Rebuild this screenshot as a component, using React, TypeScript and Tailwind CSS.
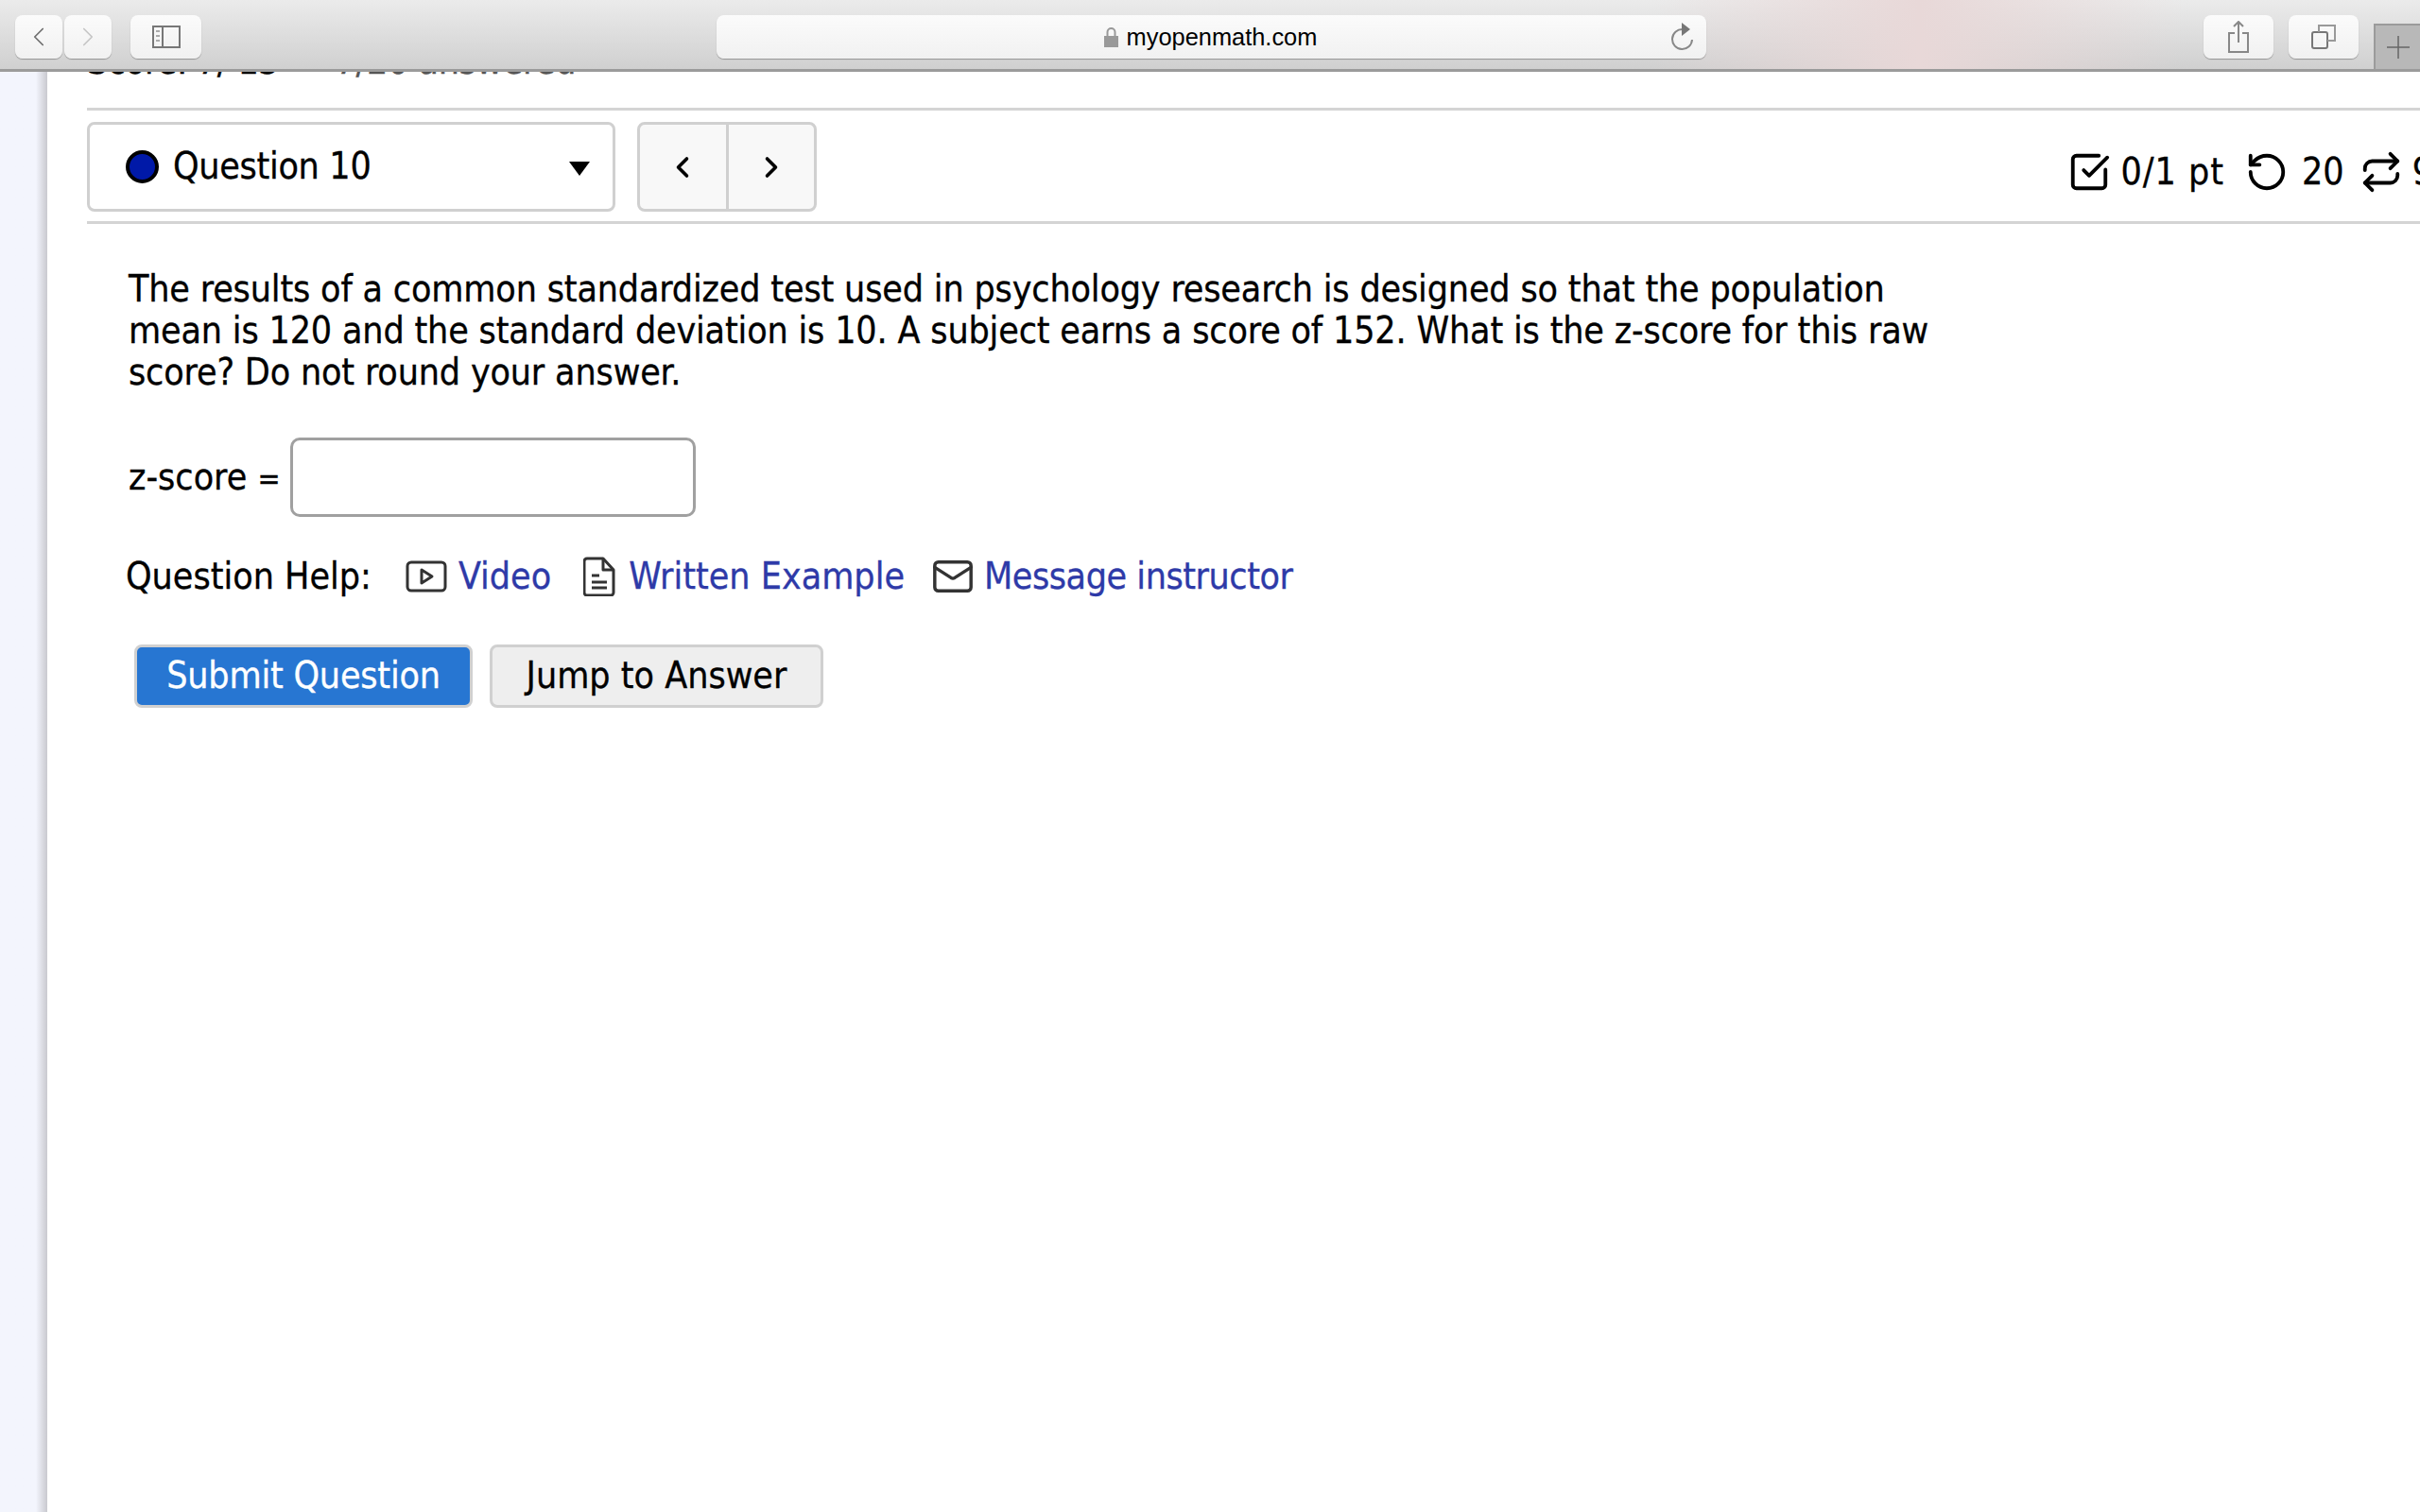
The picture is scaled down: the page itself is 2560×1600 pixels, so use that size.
import { ChevronLeft, ChevronRight, Mail, Repeat, RotateCcw, SquareCheckBig } from 'lucide-react';

const bodyFont = "font-['DejaVu_Sans',sans-serif] [font-stretch:condensed] [-webkit-text-stroke:0.3px_currentColor]";

function ToolbarButton({ className, children }: { className: string; children: React.ReactNode }) {
  return (
    <div className={`h-[46px] flex items-center justify-center rounded-[8px] bg-gradient-to-b from-[#fbfbfb] to-[#f1f1f1] shadow-[0_1px_1px_rgba(0,0,0,0.3)] ${className}`}>
      {children}
    </div>
  );
}

export default function App() {
  return (
    <div className="w-[2560px] h-[1600px] overflow-hidden bg-white flex flex-col">
      {/* browser toolbar */}
      <div className="relative h-[76px] shrink-0 bg-gradient-to-b from-[#ebebeb] to-[#d0d0d0] border-b-[3px] border-[#9b9b9b] flex items-start pt-[16px] pl-[16px] z-10">
        <div className="absolute top-0 right-[250px] w-[560px] h-full bg-gradient-to-r from-transparent via-[#e8d8d8] to-transparent" />
        <div className="relative flex gap-[2px]">
          <ToolbarButton className="w-[50px]">
            <ChevronLeft size={34} strokeWidth={1.2} className="text-[#6e6e6e]" />
          </ToolbarButton>
          <ToolbarButton className="w-[50px]">
            <ChevronRight size={34} strokeWidth={1.2} className="text-[#c6c6c6]" />
          </ToolbarButton>
        </div>
        <ToolbarButton className="relative ml-[20px] w-[75px]">
          <svg width="30" height="24" viewBox="0 0 30 24" fill="none">
            <rect x="1" y="1" width="28" height="22" stroke="#777" strokeWidth="2" />
            <path d="M11 1v22" stroke="#777" strokeWidth="2" />
            <path d="M4 6h4M4 11h4M4 16h4" stroke="#aaa" strokeWidth="2" />
          </svg>
        </ToolbarButton>
        <ToolbarButton className="relative ml-[545px] w-[1047px]">
          <div className="flex items-center gap-[9px] font-['Liberation_Sans',sans-serif] text-[25.4px] text-black -ml-[2px]">
            <svg width="15" height="22" viewBox="0 0 15 22">
              <path d="M3.500 10V6a4 4 0 0 1 8 0v4" fill="none" stroke="#999" strokeWidth="2" />
              <rect x="0" y="10" width="15" height="12" fill="#999" />
            </svg>
            myopenmath.com
          </div>
          <svg className="absolute right-[12px] top-[8px]" width="26" height="30" viewBox="0 0 26 30" fill="none">
            <path d="M13 7a10.500 10.500 0 1 0 10 11" stroke="#888" strokeWidth="2" />
            <path d="M12 0l9 7-9 7z" fill="#777" />
          </svg>
        </ToolbarButton>
        <ToolbarButton className="relative ml-[526px] w-[74px]">
          <svg width="24" height="34" viewBox="0 0 24 34" fill="none">
            <path d="M12 1v22M7 6l5-5 5 5" stroke="#888" strokeWidth="2" />
            <path d="M8 13H2v20h20V13h-6" stroke="#888" strokeWidth="2" />
          </svg>
        </ToolbarButton>
        <ToolbarButton className="relative ml-[16px] w-[74px]">
          <svg width="26" height="26" viewBox="0 0 26 26" fill="none">
            <rect x="1" y="8" width="16" height="17" rx="2" stroke="#777" strokeWidth="2" />
            <path d="M8 8V1h17v16h-8" stroke="#999" strokeWidth="2" />
          </svg>
        </ToolbarButton>
        <div className="relative ml-[16px] mt-[9px] flex-1 h-[48px] bg-[#b8b8b8] border-l-2 border-t-2 border-[#9b9b9b] flex items-center pl-[12px]">
          <svg width="24" height="24" viewBox="0 0 24 24" fill="none">
            <path d="M12 0v24M0 12h24" stroke="#666" strokeWidth="1.500" />
          </svg>
        </div>
      </div>

      <div className="flex flex-1 min-h-0">
        <div className="w-[50px] shrink-0 bg-gradient-to-r from-[#f3f5fd] from-[76%] to-[#c9c9cf]" />
        <main className={`flex-1 min-w-0 pl-[42px] overflow-hidden text-black ${bodyFont}`}>
          {/* score line scrolled under the toolbar */}
          <div className="h-[41px] overflow-hidden border-b-[3px] border-[#d4d4d4]">
            <div className="-mt-[33px] flex gap-[60px] text-[39px] leading-[44px]">
              <span className="tracking-[-0.7px]">Score: 7/ 13</span>
              <span className="text-[#555] tracking-[-0.4px]">7/20 answered</span>
            </div>
          </div>

          <div className="h-[120px] flex items-start border-b-[3px] border-[#d4d4d4] pt-[12px]">
            <div className="w-[559px] h-[95px] rounded-[8px] border-[3px] border-[#d0d0d0] flex items-center pl-[38px] pr-[24px]">
              <span className="w-[35px] h-[35px] rounded-full bg-[#0019a8] border-[4px] border-black" />
              <span className="ml-[15px] text-[39px] flex-1 tracking-[-0.3px]">Question 10</span>
              <span className="w-0 h-0 border-x-[11px] border-x-transparent border-t-[15px] border-t-black mt-[4px]" />
            </div>
            <div className="ml-[23px] w-[190px] h-[95px] rounded-[8px] border-[3px] border-[#d0d0d0] bg-[#f8f8f8] flex">
              <div className="flex-1 flex items-center justify-center border-r-[3px] border-[#d0d0d0]">
                <ChevronLeft size={36} strokeWidth={2.4} />
              </div>
              <div className="flex-1 flex items-center justify-center">
                <ChevronRight size={36} strokeWidth={2.4} />
              </div>
            </div>
            <div className="ml-auto -mr-[14px] flex items-center text-[39px] whitespace-nowrap mt-[24px]">
              <SquareCheckBig size={46} strokeWidth={2} />
              <span className="ml-[10px] tracking-[1px]">0/1 pt</span>
              <RotateCcw size={46} strokeWidth={2} className="ml-[22px]" />
              <span className="ml-[14px]">20</span>
              <Repeat size={46} strokeWidth={2} className="ml-[16px]" />
              <span className="ml-[10px]">9</span>
            </div>
          </div>

          <div className="pl-[44px]">
            <p className="mt-[47px] w-[1930px] text-[39px] leading-[44px] tracking-[-0.16px]">
              The results of a common standardized test used in psychology research is designed so that the population mean is 120 and the standard deviation is 10. A subject earns a score of 152. What is the z-score for this raw score? Do not round your answer.
            </p>

            <div className="mt-[47px] flex items-center text-[39px]">
              <span>z-score <span className="text-[32px]">=</span></span>
              <div className="ml-[10px] w-[429px] h-[84px] rounded-[10px] border-[3px] border-[#a0a0a0] bg-white" />
            </div>

            <div className="mt-[33px] -ml-[3px] flex items-center text-[39px] leading-[60px]">
              <span>Question Help:</span>
              <span className="ml-[36px] flex items-center text-[#2e3aa8]">
                <svg width="44" height="36" viewBox="0 0 44 36" fill="none">
                  <rect x="2" y="3" width="40" height="30" rx="4" stroke="#333" strokeWidth="3" />
                  <path d="M17 11l11 7-11 7z" stroke="#333" strokeWidth="3" strokeLinejoin="round" />
                </svg>
                <span className="ml-[12px]">Video</span>
              </span>
              <span className="ml-[34px] flex items-center text-[#2e3aa8]">
                <svg width="34" height="42" viewBox="0 0 34 42" fill="none" stroke="#333" strokeWidth="3" strokeLinejoin="round">
                  <path d="M4 2h17l11 12v24a3 3 0 0 1-3 3H4a3 3 0 0 1-3-3V5a3 3 0 0 1 3-3z" />
                  <path d="M21 2v12h11M9 20h8M9 27h16M9 33h16" />
                </svg>
                <span className="ml-[14px]">Written Example</span>
              </span>
              <span className="ml-[28px] flex items-center text-[#2e3aa8]">
                <Mail size={46} strokeWidth={1.8} className="text-[#333]" />
                <span className="ml-[10px] tracking-[-0.45px]">Message instructor</span>
              </span>
            </div>

            <div className="mt-[42px] ml-[6px] flex gap-[18px] text-[39px]">
              <div className="w-[358px] h-[67px] rounded-[8px] border-[3px] border-[#d0d0d0] bg-[#2776d2] text-white flex items-center justify-center tracking-[-0.2px]">Submit Question</div>
              <div className="w-[353px] h-[67px] rounded-[8px] border-[3px] border-[#d0d0d0] bg-[#eeeeee] flex items-center justify-center">Jump to Answer</div>
            </div>
          </div>
        </main>
      </div>
    </div>
  );
}
